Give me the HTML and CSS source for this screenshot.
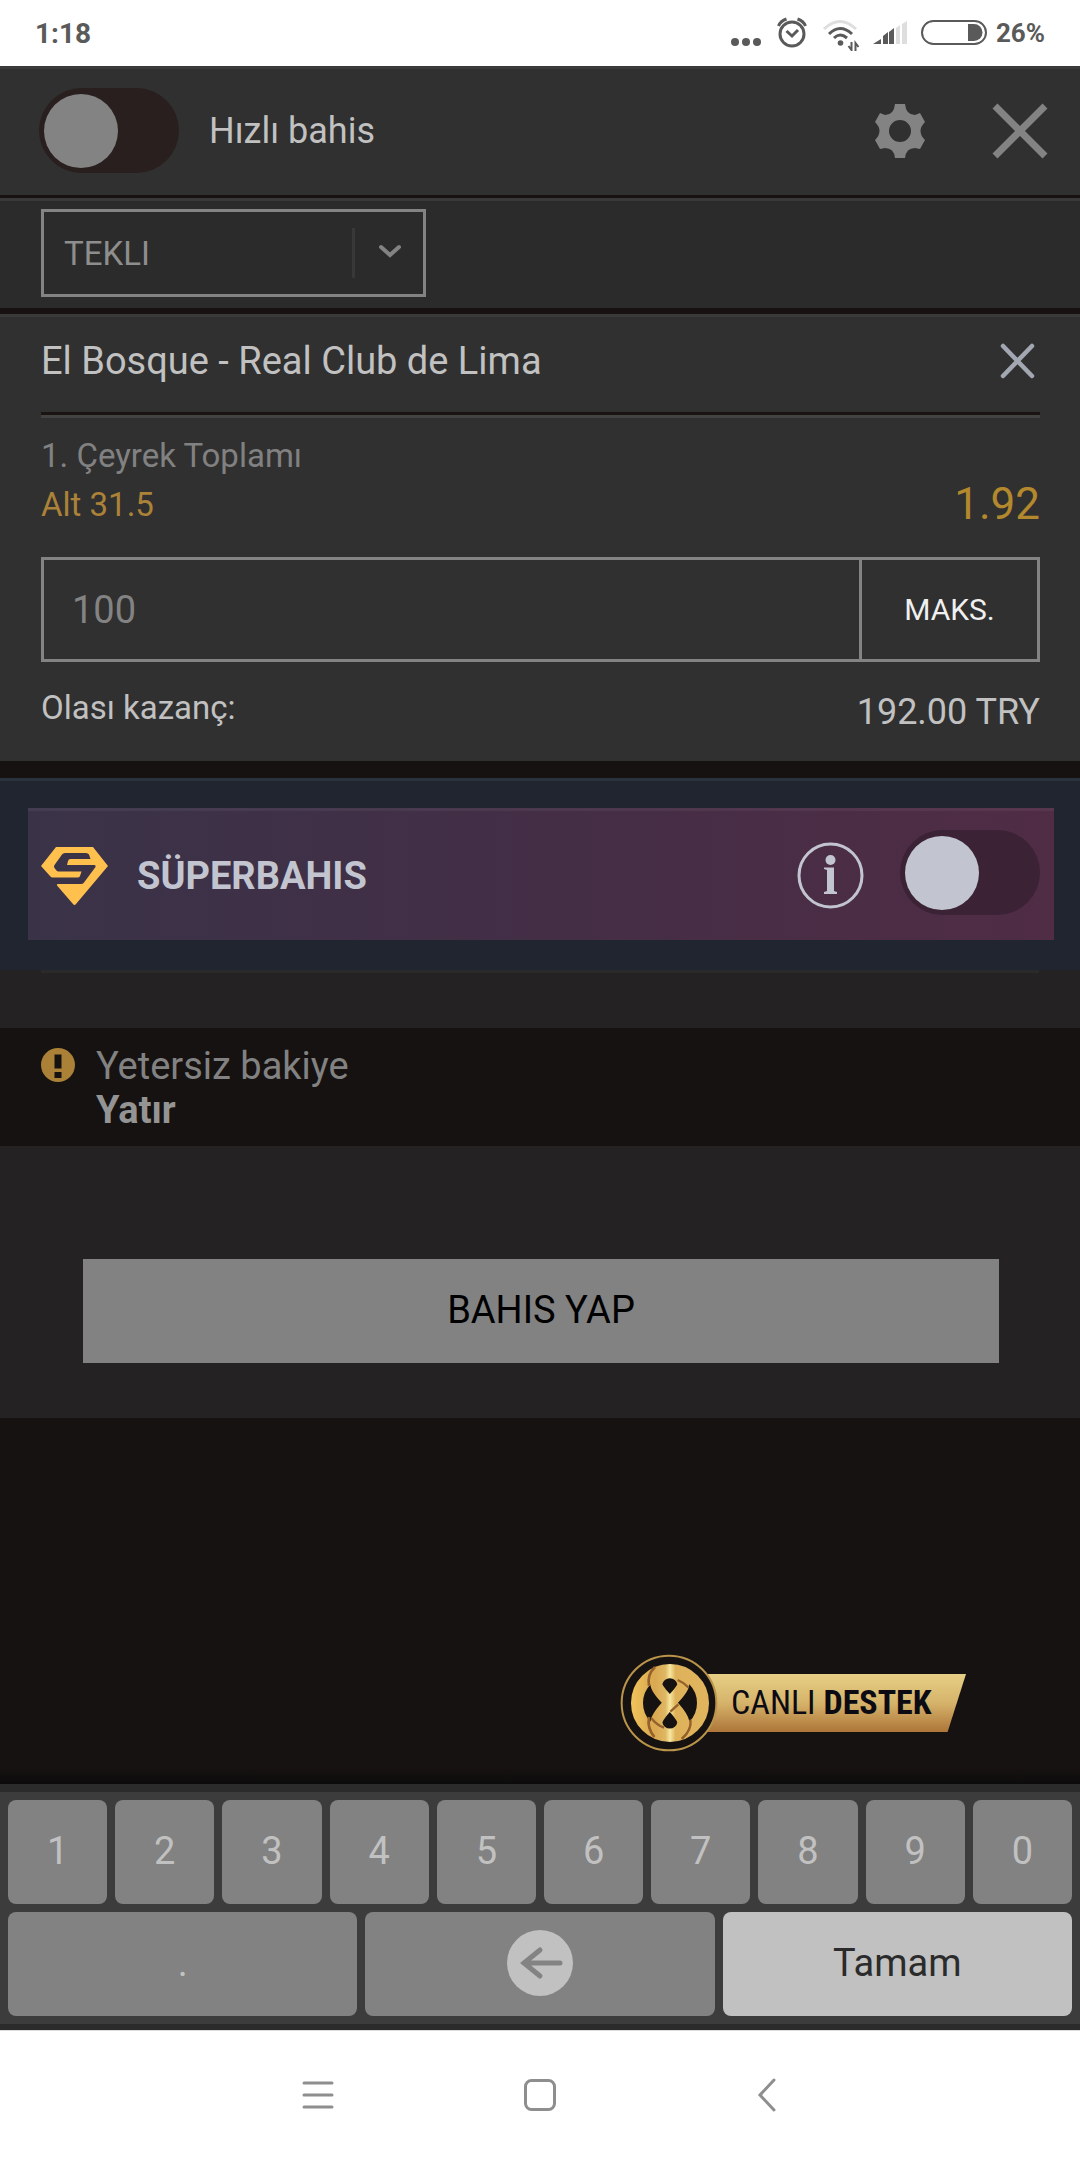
FILE: index.html
```html
<!DOCTYPE html>
<html lang="tr">
<head>
    <meta charset="UTF-8">
    <meta name="viewport" content="width=device-width, initial-scale=1.0">
    <title>Bahis Kuponu</title>
    <link rel="stylesheet" href="styles.css">
</head>
<body>

<!-- Status bar -->
<div class="status-bar">
    <span class="time">1:18</span>
    <div class="status-icons">
        <svg width="38" height="36" viewBox="0 0 38 36" fill="#5a5a5a">
            <circle cx="7" cy="27" r="4"/>
            <circle cx="18" cy="27" r="4"/>
            <circle cx="29" cy="27" r="4"/>
        </svg>
        <svg width="38" height="36" viewBox="0 0 38 36" fill="none" stroke="#5a5a5a" stroke-width="3">
            <circle cx="18" cy="19" r="12"/>
            <path d="M12.500 16l5.500 5 6-6"/>
            <path d="M4.500 11q2-5 8-7M31.500 11q-2-5-8-7"/>
        </svg>
        <svg width="42" height="36" viewBox="0 0 42 36" fill="none" stroke="#5a5a5a" stroke-width="3">
            <path d="M4 14q16-15 32 0" stroke="#dedede"/>
            <path d="M9 19q11-11 23 0M14 23q6-6 13 0"/>
            <circle cx="20.500" cy="28" r="2.800" fill="#5a5a5a" stroke="none"/>
            <path d="M31.500 27v8l-3-4M35.500 36v-8l3 4" stroke-width="2"/>
        </svg>
        <svg width="40" height="36" viewBox="0 0 40 36" fill="#5a5a5a">
            <path d="M3 29l8-5v5zM13 29v-8l5-4v12zM19 29V17l5-4v16z"/>
            <path d="M26 29V13l4-3v19zM32 29V9l5-3v23z" fill="#dedede"/>
        </svg>
        <svg width="70" height="36" viewBox="0 0 70 36">
            <rect x="4" y="6" width="64" height="23" rx="11.500" fill="none" stroke="#5a5a5a" stroke-width="2"/>
            <path d="M50 9h6a8.500 8.500 0 0 1 0 17h-6z" fill="#5a5a5a"/>
        </svg>
        <span class="battery">26%</span>
    </div>
</div>

<div class="header">
    <input type="checkbox" class="switch" id="quick-bet">
    <label class="quick-label" for="quick-bet">Hızlı bahis</label>
    <button class="icon-btn" aria-label="Ayarlar">
        <svg width="50" height="54" viewBox="0 0 50 54">
            <path fill="#838383" fill-rule="evenodd" d="M20 0h10q1 11 10 11l5-2 5 9q-9 9 0 18l-5 9-5-1q-9 0-10 10H20q-1-10-10-10l-5 1-5-9q9-9 0-18l5-9 5 2q9 0 10-11zM25 16a11 11 0 1 0 0 22 11 11 0 1 0 0-22z"/>
        </svg>
    </button>
    <button class="icon-btn" aria-label="Kapat">
        <svg width="56" height="56" viewBox="0 0 56 56" stroke="#838383" stroke-width="7">
            <path d="M3 3l50 50M53 3L3 53"/>
        </svg>
    </button>
</div>

<div class="type-bar">
    <div class="select-box">
        <select class="type-select" aria-label="Kupon tipi">
            <option>TEKLI</option>
        </select>
        <svg class="chevron" width="24" height="14" viewBox="0 0 24 14" fill="none" stroke="#838383" stroke-width="4" stroke-linecap="round">
            <path d="M3 3l9 8 9-8"/>
        </svg>
    </div>
</div>

<!-- Selected bet -->
<div class="bet">
    <div class="bet-title">
        <h1>El Bosque - Real Club de Lima</h1>
        <button class="icon-btn" aria-label="Bahsi sil">
            <svg width="44" height="36" viewBox="0 0 44 36" stroke="#a2a7b2" stroke-width="4.500" stroke-linecap="round">
                <path d="M7 3l29 30M36 3L7 33"/>
            </svg>
        </button>
    </div>
    <div class="bet-info">
        <div>
            <div class="market">1. Çeyrek Toplamı</div>
            <div class="pick">Alt 31.5</div>
        </div>
        <div class="odds">1.92</div>
    </div>
    <div class="stake">
        <input type="text" class="stake-input" value="100" aria-label="Bahis miktarı">
        <button class="max-btn">MAKS.</button>
    </div>
    <div class="winnings">
        <span class="win-label">Olası kazanç:</span>
        <span class="win-value">192.00 TRY</span>
    </div>
</div>

<div class="super">
    <div class="super-box">
        <svg width="67" height="58" viewBox="0 0 67 58" fill="#ffc04e">
            <path d="M15 0H52L67 19 35 57q-1.500 2-3 0L16 38.500q-.5-1.500 1-1.500H40q2 0 3-1.500L54.500 20q.5-2-1.500-2H26l1-4q.5-2 2.500-2H49.500L48 7.500Q47 6 45 6H24q-2 0-3 1.500L13.500 18q-1 1.500 0 3l1.500 2q1 1.500 3 1.500H40.500L39 29q-.5 1.500-2.500 1.500H12q-2 0-3-1.500L0 19z"/>
        </svg>
        <label class="super-label" for="super-bet">SÜPERBAHIS</label>
        <button class="icon-btn" aria-label="Bilgi">
            <svg width="67" height="67" viewBox="0 0 67 67" fill="#c2c5cf">
                <circle cx="33.500" cy="33.500" r="31.500" fill="none" stroke="#c2c5cf" stroke-width="3"/>
                <circle cx="33.500" cy="18" r="5"/>
                <path d="M27 25.500h10V49l3 1v2H27v-2l3-1V28l-3-1z"/>
            </svg>
        </button>
        <input type="checkbox" class="switch switch-super" id="super-bet">
    </div>
</div>

<div class="divider"></div>

<div class="notice">
    <svg width="34" height="34" viewBox="0 0 34 34">
        <circle cx="17" cy="17" r="17" fill="#aa8136"/>
        <path d="M13.500 6.500h7v14h-7zM13.500 24h7v6h-7z" fill="#161211"/>
    </svg>
    <div>
        <div>Yetersiz bakiye</div>
        <a href="#">Yatır</a>
    </div>
</div>

<div class="place-bet">
    <button class="place-btn">BAHIS YAP</button>
</div>

<div class="support">
    <button class="support-btn">
        <svg class="support-logo" width="98" height="98" viewBox="61 43 294 294" fill="none">
            <defs>
                <linearGradient id="gold" gradientUnits="userSpaceOnUse" x1="93" y1="0" x2="329" y2="0">
                    <stop offset="0" stop-color="#f0c45c"/>
                    <stop offset=".3" stop-color="#d9a850"/>
                    <stop offset=".44" stop-color="#dfb662"/>
                    <stop offset=".5" stop-color="#f6e7a0"/>
                    <stop offset=".57" stop-color="#dfb25a"/>
                    <stop offset="1" stop-color="#e0b55e"/>
                </linearGradient>
            </defs>
            <circle cx="208" cy="190" r="142" fill="#161211" stroke="#b9944a" stroke-width="6"/>
            <circle cx="211" cy="190" r="99" stroke="url(#gold)" stroke-width="36"/>
            <path d="M166 82q-24 22-18 56M148 232q-6 34 16 60M272 240q4 32-26 58" stroke="#94602b" stroke-width="8"/>
            <path d="M170 132A41 41 0 0 1 251 132C251 160 170 218 170 250A41 41 0 0 0 251 250C251 218 170 160 170 132z" stroke="url(#gold)" stroke-width="36"/>
            <path d="M234 121q16 6 32 22M212 216l24-22M155 236q18 22 38 28" stroke="#94602b" stroke-width="7"/>
        </svg>
        <span class="support-text">CANLI <b>DESTEK</b></span>
    </button>
</div>

<!-- Numeric keyboard -->
<div class="keyboard">
    <div class="keys keys-digits">
        <button class="key">1</button>
        <button class="key">2</button>
        <button class="key">3</button>
        <button class="key">4</button>
        <button class="key">5</button>
        <button class="key">6</button>
        <button class="key">7</button>
        <button class="key">8</button>
        <button class="key">9</button>
        <button class="key">0</button>
    </div>
    <div class="keys keys-actions">
        <button class="key">.</button>
        <button class="key" aria-label="Sil">
            <svg width="66" height="66" viewBox="0 0 66 66" fill="none">
                <circle cx="33" cy="33" r="33" fill="#c1c1c1"/>
                <path d="M33 20L17 33l16 13M17 33h36" stroke="#838383" stroke-width="5" stroke-linecap="round"/>
            </svg>
        </button>
        <button class="key key-done">Tamam</button>
    </div>
</div>

<div class="nav-bar">
    <button class="icon-btn" aria-label="Menü">
        <svg width="36" height="36" viewBox="0 0 36 36" stroke="#8e8e8e" stroke-width="3" stroke-linecap="round">
            <path d="M6 5h28M6 17h28M6 29h28"/>
        </svg>
    </button>
    <button class="icon-btn" aria-label="Ana ekran">
        <svg width="36" height="36" viewBox="0 0 36 36" fill="none" stroke="#8e8e8e" stroke-width="3">
            <rect x="3.500" y="2.500" width="29" height="29" rx="6"/>
        </svg>
    </button>
    <button class="icon-btn" aria-label="Geri">
        <svg width="36" height="36" viewBox="0 0 36 36" fill="none" stroke="#8e8e8e" stroke-width="3" stroke-linecap="round">
            <path d="M28 2L14 17l14 15"/>
        </svg>
    </button>
</div>

</body>
</html>
```

FILE: styles.css
```css
* {
    box-sizing: border-box;
}
body {
    font-family: Roboto, sans-serif;
    font-size: 38px;
    margin: 0;
    min-height: 100vh;
    display: flex;
    flex-direction: column;
    background-color: #161211;
    color: #c1c1c1;
}
button, input, select {
    font: inherit;
    color: inherit;
    border: none;
    border-radius: 0;
    margin: 0;
    padding: 0;
    background: none;
}
button {
    cursor: pointer;
}
svg {
    display: block;
    flex-shrink: 0;
}

/* Status bar */
.status-bar {
    height: 66px;
    padding: 0 35px;
    display: flex;
    align-items: center;
    justify-content: space-between;
    background-color: #fff;
    color: #5a5a5a;
    font-size: 28px;
    font-weight: bold;
}
.status-icons {
    display: flex;
    align-items: center;
    gap: 8px;
}
.battery {
    font-size: 26px;
}

/* Header */
.header {
    display: flex;
    align-items: center;
    height: 132px;
    padding: 0 32px 0 39px;
    background-color: #303030;
    box-shadow: inset 0 3px #3a3a3a;
    border-bottom: 3px solid #171112;
}
.quick-label {
    flex: 1;
    margin-left: 30px;
    font-size: 36px;
}
.header .icon-btn + .icon-btn {
    margin-left: 67px;
}
.switch {
    appearance: none;
    width: 140px;
    height: 85px;
    padding: 6px 5px;
    border-radius: 43px;
    background-color: #281f1e;
    cursor: pointer;
}
.switch::before {
    content: "";
    display: block;
    width: 74px;
    height: 74px;
    border-radius: 50%;
    background-color: #838383;
}
.switch:checked::before {
    margin-left: auto;
}

.type-bar {
    padding: 11px 41px;
    background-color: #2b2b2b;
    box-shadow: inset 0 3px #393939;
    border-bottom: 6px solid #171112;
}
.select-box {
    position: relative;
    width: 385px;
    height: 88px;
    border: 3px solid #838383;
}
.type-select {
    appearance: none;
    width: 100%;
    height: 100%;
    padding-left: 20px;
    font-size: 33px;
    color: #8e8e8e;
}
.select-box::after {
    content: "";
    position: absolute;
    top: 16px;
    right: 68px;
    width: 3px;
    height: 50px;
    background-color: #383838;
}
.chevron {
    position: absolute;
    top: 32px;
    right: 21px;
}

/* Bet */
.bet {
    padding: 0 40px 0 41px;
    background-color: #303030;
    box-shadow: inset 0 3px #3a3a3a;
    border-bottom: 17px solid #161211;
}
.bet-title {
    display: flex;
    align-items: center;
    justify-content: space-between;
    height: 101px;
    padding-bottom: 4px;
    border-bottom: 3px solid #1a1412;
}
.bet-title h1 {
    margin: 0;
    font-size: 38px;
    font-weight: normal;
}
.bet-info {
    display: flex;
    align-items: flex-end;
    justify-content: space-between;
    padding: 13px 0 28px;
    border-top: 3px solid #434343;
    font-size: 33px;
    line-height: 49px;
}
.market {
    color: #818181;
}
.pick {
    color: #ab8238;
}
.odds {
    font-size: 44px;
    color: #b4882d;
}
.stake {
    display: flex;
    height: 105px;
    border: 3px solid #838383;
}
.stake-input {
    flex: 1;
    min-width: 0;
    padding-left: 28px;
    color: #838383;
    outline: none;
}
.max-btn {
    width: 178px;
    border-left: 3px solid #838383;
    font-size: 30px;
    color: #f0f0f0;
}
.winnings {
    display: flex;
    align-items: center;
    justify-content: space-between;
    height: 99px;
}
.win-label {
    padding-bottom: 8px;
    font-size: 33px;
}
.win-value {
    font-size: 36px;
}

/* Super bet */
.super {
    padding: 30px 26px 30px 28px;
    background-color: #212530;
    box-shadow: inset 0 3px #2a323d;
}
.super-box {
    display: flex;
    align-items: center;
    height: 132px;
    padding: 3px 14px 0 13px;
    background: linear-gradient(to right, #3a3348, #432e46 50%, #502c45);
    box-shadow: inset 0 3px rgba(255, 255, 255, 0.05);
    color: #c2c5cf;
}
.super-label {
    flex: 1;
    margin-left: 29px;
    font-weight: bold;
}
.switch-super {
    margin-left: 36px;
    margin-bottom: 6px;
    background-color: #3b2235;
}
.switch-super::before {
    background-color: #c2c5cf;
}
.divider {
    height: 58px;
    padding: 0 41px;
    background-color: #242223;
}
.divider::before {
    content: "";
    display: block;
    height: 3px;
    background-color: #2a2a2a;
}

.notice {
    display: flex;
    gap: 21px;
    padding: 16px 41px 14px;
    line-height: 44px;
    color: #828282;
}
.notice svg {
    margin-top: 4px;
}
.notice a {
    display: block;
    color: #949494;
    font-weight: bold;
    text-decoration: none;
}
.place-bet {
    padding: 113px 81px 55px 83px;
    background-color: #242223;
}
.place-btn {
    display: block;
    width: 100%;
    height: 104px;
    padding-bottom: 2px;
    background-color: #828282;
    color: #000;
}

/* Live support */
.support {
    flex: 1;
    display: flex;
    align-items: flex-end;
    justify-content: flex-end;
    padding: 32px 114px;
    background: linear-gradient(to top, #0c0b0b, #161211 16px);
}
.support-btn {
    display: flex;
    align-items: center;
}
.support-logo {
    position: relative;
    z-index: 1;
}
.support-text {
    width: 263px;
    height: 58px;
    margin-left: -15px;
    padding-left: 28px;
    background: linear-gradient(#e6cf85, #d6b36a 50%, #ad7539);
    clip-path: polygon(0 0, 100% 0, 93% 100%, 0 100%);
    color: #0c0b14;
    font-family: "Roboto Condensed", "Liberation Sans Narrow", Roboto, sans-serif;
    font-size: 34px;
    line-height: 56px;
    text-align: left;
    white-space: nowrap;
}

/* Keyboard */
.keyboard {
    padding: 8px;
    background-color: #3c3c3c;
    border-top: 8px solid #2b2b2b;
    border-bottom: 6px solid #2b2b2b;
}
.keys {
    display: grid;
    gap: 8px;
}
.keys-digits {
    grid-template-columns: repeat(10, 1fr);
    margin-bottom: 8px;
}
.keys-actions {
    grid-template-columns: repeat(3, 1fr);
}
.key {
    display: flex;
    align-items: center;
    justify-content: center;
    height: 104px;
    padding-bottom: 2px;
    border-radius: 8px;
    background-color: #828282;
}
.key-done {
    background-color: #c1c1c1;
    color: #2b2b2b;
}

.nav-bar {
    display: flex;
    align-items: center;
    justify-content: center;
    gap: 188px;
    height: 130px;
    border-top: 1px solid #ddd;
    background-color: #fff;
}
```
